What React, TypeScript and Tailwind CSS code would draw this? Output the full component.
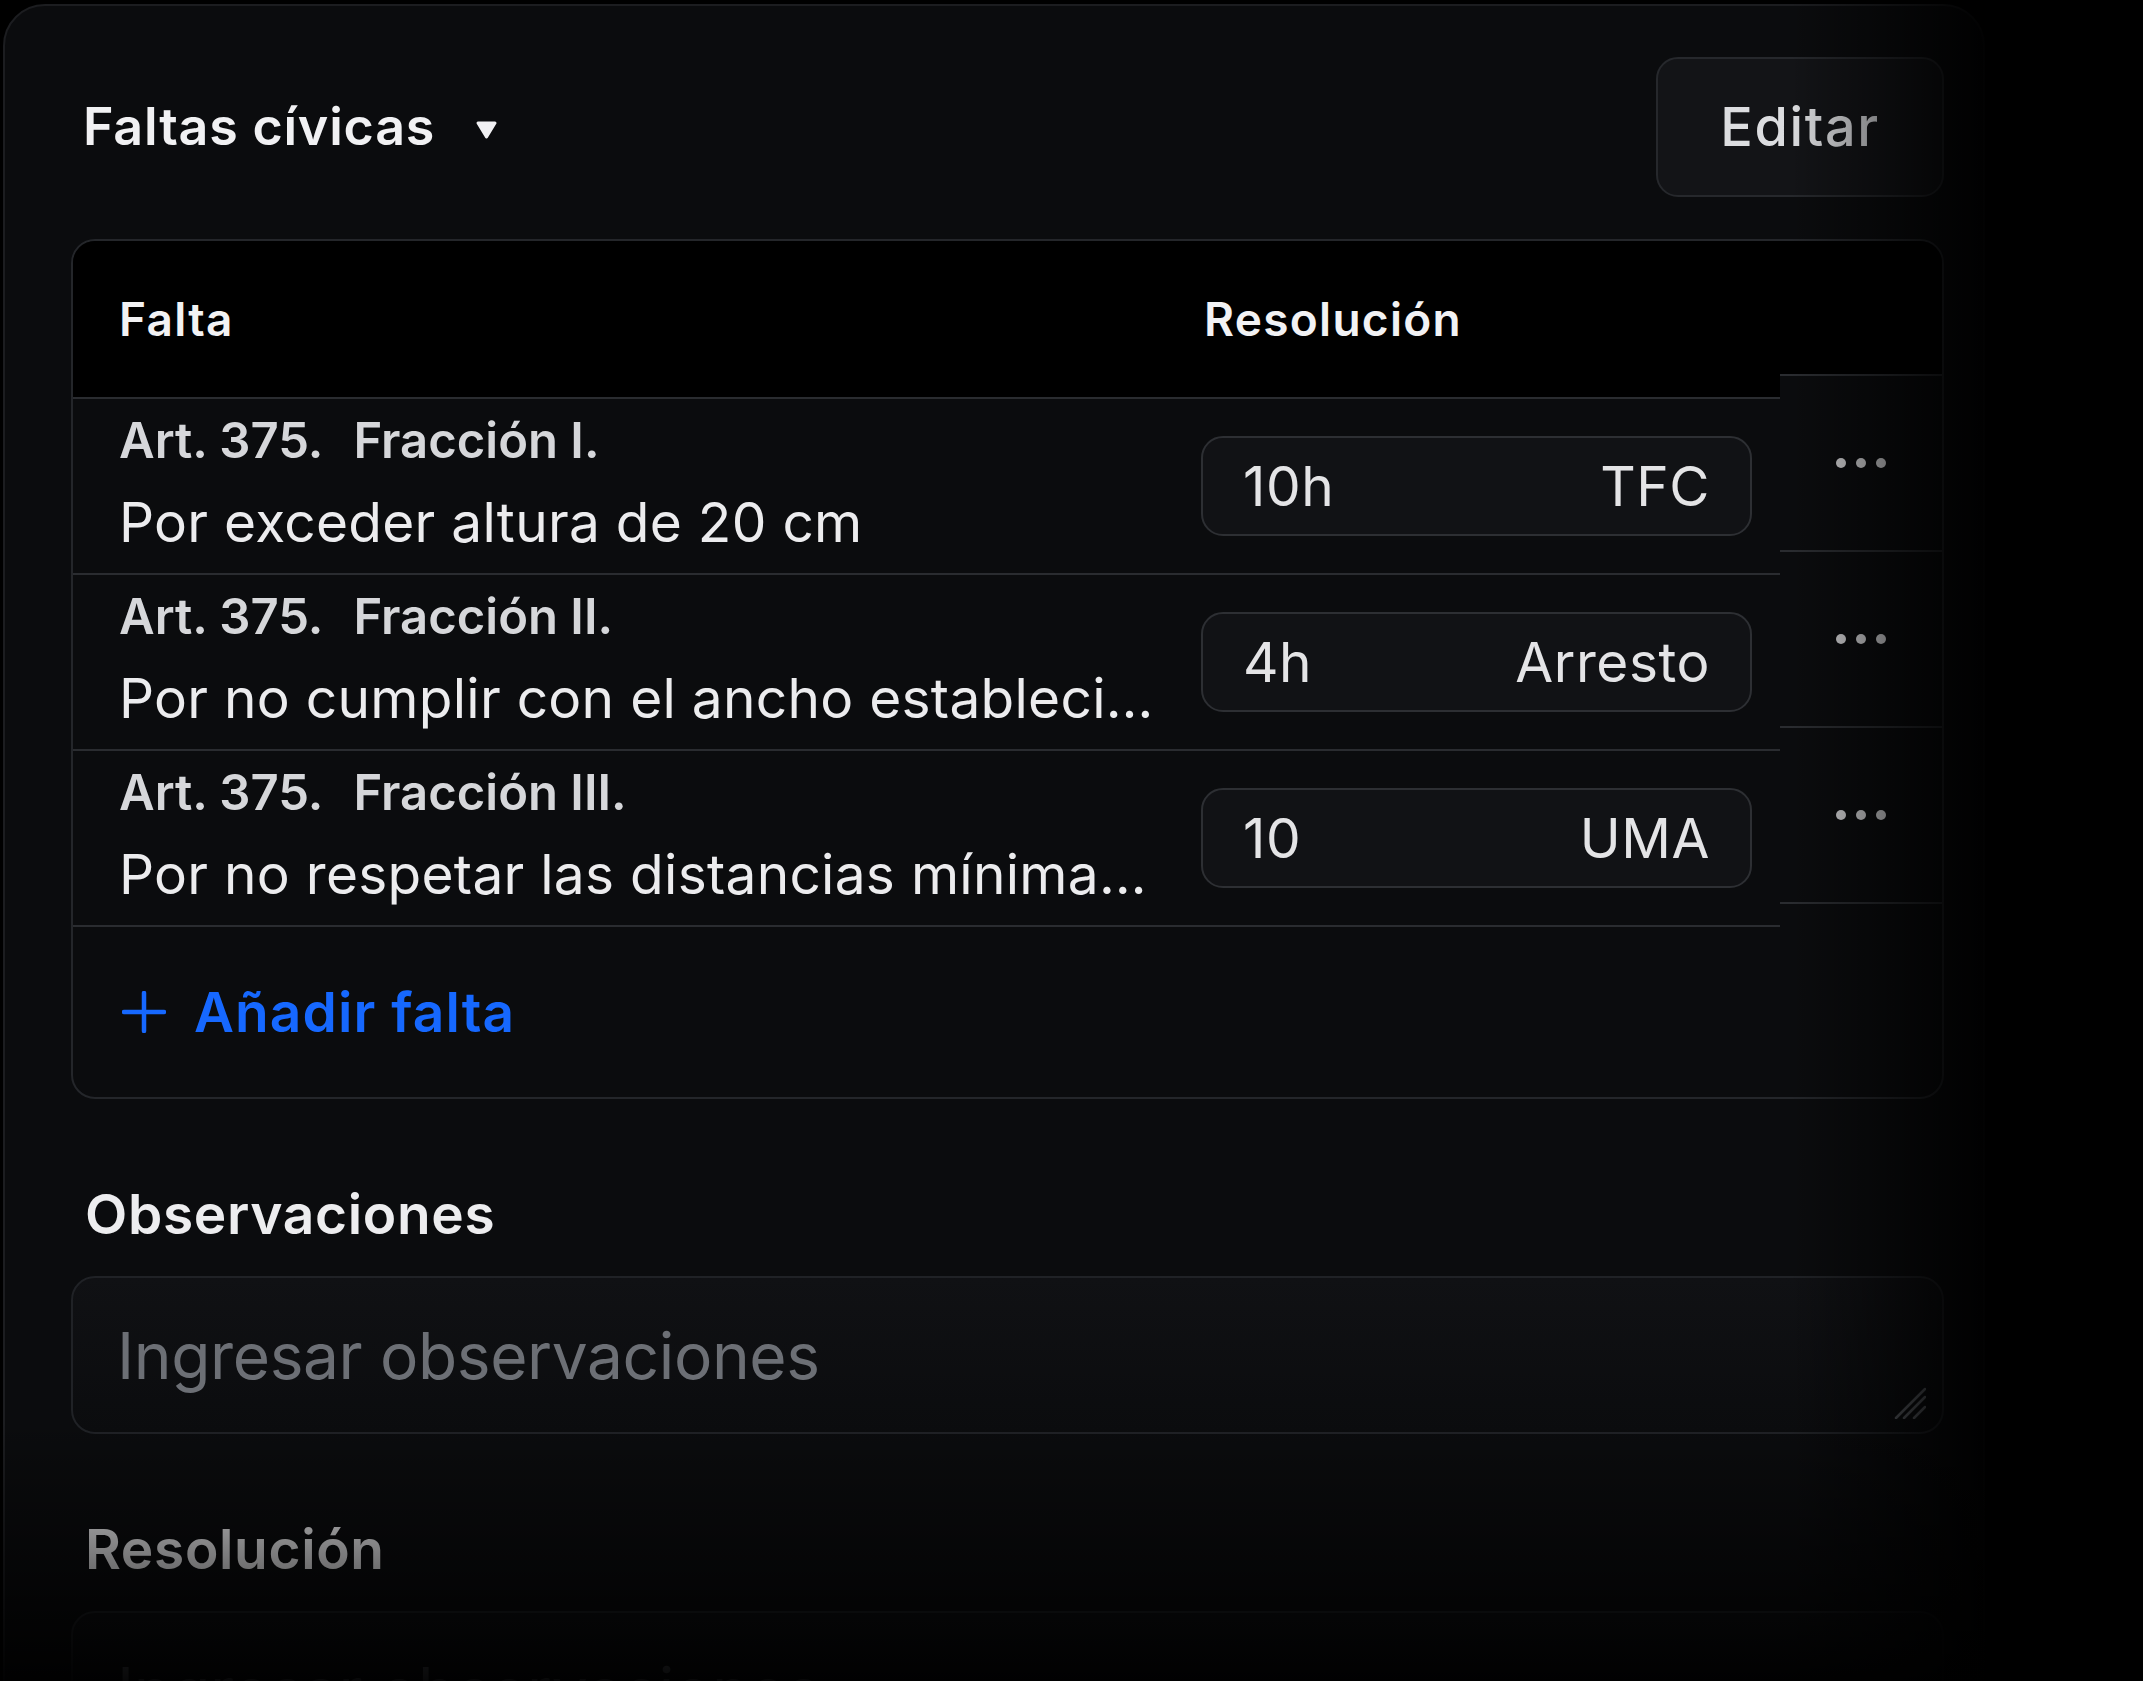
import React from 'react';

type Falta = { fraccion: string; text: string; amount: string; unit: string };

const faltas: Falta[] = [
  { fraccion: 'Fracción I.', text: 'Por exceder altura de 20 cm', amount: '10h', unit: 'TFC' },
  { fraccion: 'Fracción II.', text: 'Por no cumplir con el ancho estableci…', amount: '4h', unit: 'Arresto' },
  { fraccion: 'Fracción III.', text: 'Por no respetar las distancias mínima…', amount: '10', unit: 'UMA' },
];

const Caret = () => (
  <svg width="23" height="20" viewBox="0 0 23 20" className="mt-[6px]">
    <path d="M3 3 H20 L11.5 17 Z" fill="#f1f1f3" stroke="#f1f1f3" strokeWidth="3" strokeLinejoin="round" />
  </svg>
);

const Dots = () => (
  <svg width="50" height="10" viewBox="0 0 50 10">
    <circle cx="5" cy="5" r="5" fill="#d2d2d4" />
    <circle cx="25" cy="5" r="5" fill="#d2d2d4" />
    <circle cx="45" cy="5" r="5" fill="#d2d2d4" />
  </svg>
);

const Plus = () => (
  <svg width="44" height="42" viewBox="0 0 44 42">
    <path d="M22 2 V40 M2 21 H42" stroke="currentColor" strokeWidth="4.5" strokeLinecap="round" />
  </svg>
);

const Grip = () => (
  <svg width="32" height="32" viewBox="0 0 32 32" className="absolute bottom-[13px] right-[16px]">
    <path d="M2 31 L31 2 M10 31 L31 10 M20 31 L31 20" stroke="#5a5d62" strokeWidth="2.5" strokeLinecap="round" />
  </svg>
);

const TextBox = () => (
  <div className="relative mt-[34px] h-[158px] rounded-[24px] border-2 border-[#202226] bg-[linear-gradient(to_bottom,#101114,#0b0c0e)] pl-[44px] pt-[46px]">
    <div className="text-[64px] leading-none tracking-[-0.006em] text-[#6c6f75]">Ingresar observaciones</div>
    <Grip />
  </div>
);

export default function App() {
  return (
    <div className="relative h-[1681px] w-[2143px] overflow-hidden bg-black font-['Inter','Liberation_Sans',sans-serif] antialiased">
      <div className="ml-[3px] mt-[4px] min-h-[1760px] w-[1982px] rounded-[42px] border-2 border-[#1c1d20] bg-[#0b0c0e] pl-[66px] pr-[39px] pt-[51px]">
        {/* header */}
        <div className="flex h-[140px] items-center justify-between">
          <div className="ml-[12px] flex items-center gap-[40px]">
            <h1 className="text-[52px] font-semibold leading-none tracking-[0.015em] text-[#f1f1f3]">Faltas cívicas</h1>
            <Caret />
          </div>
          <button className="flex h-[140px] w-[288px] items-center justify-center rounded-[22px] border-2 border-[#26282c] bg-[#131417] text-[54px] font-medium leading-none tracking-[0.03em] text-[#dcdde0]">
            Editar
          </button>
        </div>

        {/* table */}
        <div className="mt-[42px] overflow-hidden rounded-[24px] border-2 border-[#24262a] bg-[#0b0c0e]">
          <div className="flex">
            <div className="flex-1">
              <div className="grid h-[156px] grid-cols-[1fr_551px] items-center gap-[40px] bg-black pl-[46px] pr-[28px] text-[46px] font-semibold leading-none tracking-[0.028em] text-[#f2f2f4]">
                <span>Falta</span>
                <span className="ml-[3px]">Resolución</span>
              </div>
              <div className="border-b-2 border-[#2a2c30]">
                {faltas.map((f) => (
                  <div key={f.fraccion} className="grid h-[176px] grid-cols-[1fr_551px] items-center gap-[40px] border-t-2 border-[#2a2c30] pl-[46px] pr-[28px]">
                    <div className="min-w-0 pb-[6px]">
                      <div className="flex gap-[30px] text-[49px] font-semibold leading-none text-[#d6d7da]">
                        <span>Art. 375.</span>
                        <span>{f.fraccion}</span>
                      </div>
                      <div className="mt-[30px] whitespace-nowrap text-[55px] leading-none tracking-[0.005em] text-[#ececee]">{f.text}</div>
                    </div>
                    <div className="flex h-[100px] items-center justify-between rounded-[22px] border-2 border-[#2d2f33] bg-[#111215] px-[40px] text-[55px] leading-none tracking-[0.01em] text-[#e4e4e6]">
                      <span>{f.amount}</span>
                      <span>{f.unit}</span>
                    </div>
                  </div>
                ))}
              </div>
            </div>
            <div className="w-[162px]">
              <div className="h-[133px] bg-black" />
              <div className="border-b-2 border-[#2a2c30]">
                {faltas.map((f) => (
                  <div key={f.fraccion} className="flex h-[176px] items-center justify-center border-t-2 border-[#2a2c30]">
                    <Dots />
                  </div>
                ))}
              </div>
            </div>
          </div>
          <div className="flex h-[170px] items-center gap-[28px] pl-[49px] text-[55px] font-semibold leading-none tracking-[0.02em] text-[#1668ff]">
            <Plus />
            <span>Añadir falta</span>
          </div>
        </div>

        <div className="ml-[14px] mt-[88px] text-[55px] font-semibold leading-none tracking-[0.012em] text-[#ededef]">Observaciones</div>
        <TextBox />

        <div className="ml-[14px] mt-[88px] text-[55px] font-semibold leading-none tracking-[0.012em] text-[#ededef]">Resolución</div>
        <TextBox />
      </div>

      {/* edge fades */}
      <div className="pointer-events-none absolute inset-0 bg-[linear-gradient(to_right,transparent_1790px,#000_2000px)]" />
      <div className="pointer-events-none absolute inset-0 bg-[linear-gradient(to_bottom,transparent_1420px,rgba(0,0,0,0.93)_1681px)]" />
    </div>
  );
}
